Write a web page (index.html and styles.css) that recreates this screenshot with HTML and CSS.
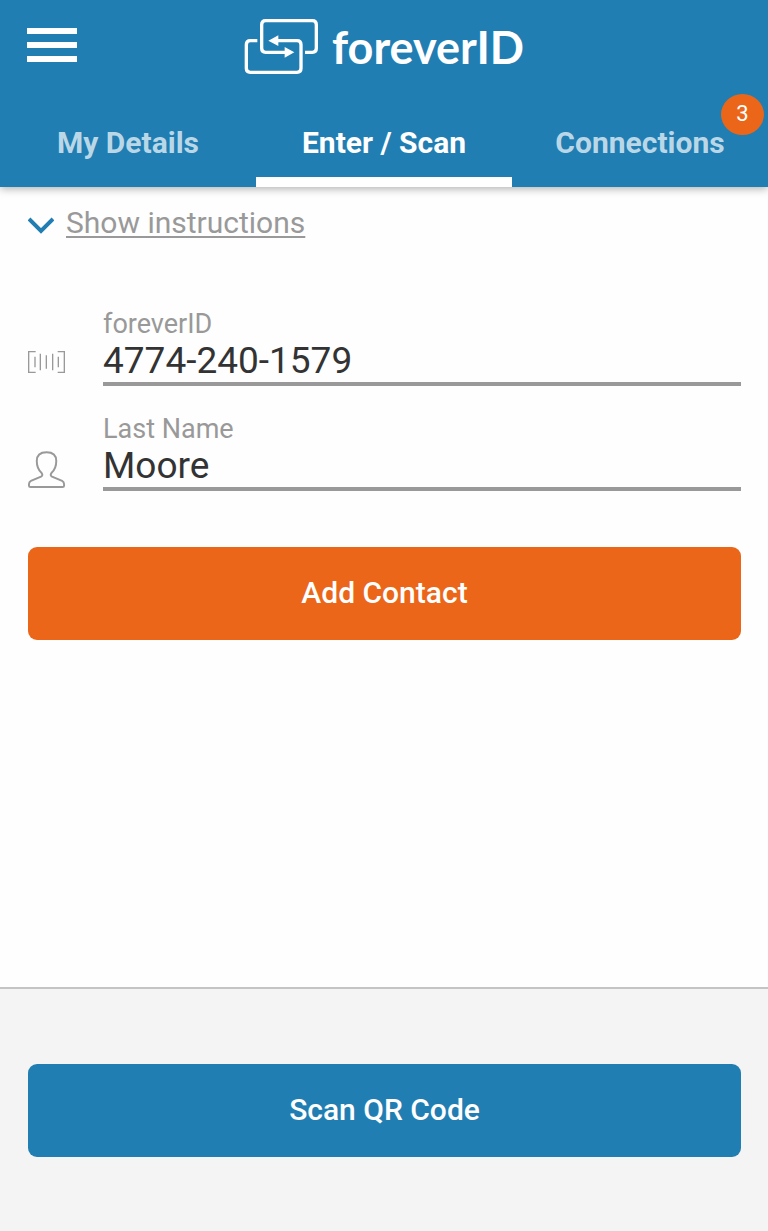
FILE: index.html
```html
<!DOCTYPE html>
<html lang="en">
<head>
<meta charset="utf-8">
<meta name="viewport" content="width=device-width, initial-scale=1">
<title>foreverID</title>
<link rel="stylesheet" href="styles.css">
</head>
<body>
<header class="header">
  <div class="topbar">
    <button class="menu" type="button" aria-label="Menu"><span></span><span></span><span></span></button>
    <div class="brand">
      <svg class="brand-icon" viewBox="30 39 222 171" aria-hidden="true">
        <path class="brand-line" d="M213 142H235Q247 142 247 130V59Q247 47 235 47H95Q83 47 83 59V130Q83 142 95 142H155M70 107H49Q37 107 37 119V190Q37 202 49 202H189Q201 202 201 190V119Q201 107 189 107H130"/>
        <path class="brand-head" d="M152 126L181 142L152 158ZM133 91L103 107L133 123Z"/>
      </svg>
      <span class="brand-name">foreverID</span>
    </div>
  </div>
  <nav class="tabs">
    <a class="tab" href="#details">My Details</a>
    <a class="tab tab-active" href="#scan" aria-current="page">Enter / Scan</a>
    <a class="tab" href="#connections">Connections<span class="badge">3</span></a>
  </nav>
</header>
<main class="main">
  <a class="instructions" href="#instructions">
    <svg class="chevron" viewBox="0 0 26 18" aria-hidden="true"><path d="M1 3L13 15L25 3"/></svg>
    <span class="instructions-text">Show instructions</span>
  </a>
  <form class="form">
    <div class="field">
      <svg class="icon-code" viewBox="53 150 117 72" aria-hidden="true">
        <path d="M76 155H55V217H76M142 155H162V217H142M74 170V202M90 161V211M108 166V206M127 161V211M144 170V202"/>
      </svg>
      <div class="field-body">
        <label class="label" for="fid">foreverID</label>
        <input class="input" id="fid" type="text" value="4774-240-1579">
      </div>
    </div>
    <div class="field">
      <svg class="icon-person" viewBox="53 132 120 120" aria-hidden="true">
        <path d="M110 139C90 139 80 150 80 166C80 187 87 196 95 203Q100 210 93 214L62 227Q56 230 56 237V242Q56 246 61 246H159Q164 246 164 242V237Q164 230 158 227L127 214Q120 210 125 203C133 196 140 187 140 166C140 150 130 139 110 139Z"/>
      </svg>
      <div class="field-body">
        <label class="label" for="lname">Last Name</label>
        <input class="input" id="lname" type="text" value="Moore">
      </div>
    </div>
    <button class="button button-add" type="button">Add Contact</button>
  </form>
</main>
<footer class="footer">
  <button class="button button-scan" type="button">Scan QR Code</button>
</footer>
</body>
</html>
```
FILE: styles.css
```css
* { box-sizing: border-box; }

body {
  margin: 0;
  min-height: 100vh;
  display: flex;
  flex-direction: column;
  background: #fefefe;
  font-family: Roboto, "Liberation Sans", sans-serif;
}

.header {
  background: #217eb2;
  box-shadow: 0 2px 8px rgba(0, 0, 0, 0.3);
}

.topbar {
  display: grid;
  grid-template-columns: 1fr auto 1fr;
  align-items: center;
  height: 94px;
  padding: 0 27px 2px;
}

.menu {
  display: flex;
  flex-direction: column;
  gap: 8px;
  width: 50px;
  padding: 0 0 2px;
  border: 0;
  background: none;
}

.menu span {
  height: 6px;
  width: 50px;
  background: #fff;
}

.brand {
  display: flex;
  align-items: center;
  gap: 14px;
  color: #fff;
}

.brand-icon { width: 74px; height: 57px; }
.brand-line { fill: none; stroke: #fff; stroke-width: 10; }
.brand-head { fill: #fff; }

.brand-name {
  padding-top: 2px;
  font: 700 45px/52px Lato, sans-serif;
}

.tabs {
  display: grid;
  grid-template-columns: repeat(3, 1fr);
}

.tab {
  position: relative;
  height: 93px;
  padding-top: 31px;
  border-bottom: 10px solid transparent;
  color: #bad7e7;
  font-size: 30px;
  font-weight: 700;
  line-height: 36px;
  text-align: center;
  text-decoration: none;
}

.tab-active {
  color: #fff;
  border-bottom-color: #fff;
}

.badge {
  position: absolute;
  top: 0;
  right: 4px;
  width: 43px;
  height: 41px;
  border-radius: 50%;
  background: #eb6618;
  color: #fff;
  font-size: 22px;
  font-weight: 400;
  line-height: 40px;
}

.main {
  flex: 1;
  padding: 18px 27px 0 28px;
}

.instructions {
  display: inline-flex;
  align-items: center;
  gap: 12px;
  color: #999;
  font-size: 30px;
  line-height: 36px;
  text-decoration: none;
}

.instructions-text {
  text-decoration: underline;
  text-decoration-thickness: 2px;
  text-underline-offset: 3px;
}

.chevron { width: 26px; height: 18px; margin-top: 4px; }
.chevron path { fill: none; stroke: #217eb2; stroke-width: 4; }

.form {
  display: flex;
  flex-direction: column;
  margin-top: 68px;
}

.field {
  display: grid;
  grid-template-columns: 75px 1fr;
  align-items: end;
  margin-bottom: 28px;
}

.field-body {
  display: flex;
  flex-direction: column;
}

.label {
  color: #999;
  font-size: 27px;
  line-height: 30px;
}

.input {
  width: 100%;
  height: 47px;
  padding: 0 0 1px;
  border: 0;
  border-bottom: 4px solid #999;
  border-radius: 0;
  outline: 0;
  background: none;
  color: #333;
  font: 400 37px/40px Roboto, "Liberation Sans", sans-serif;
}

.icon-code { width: 39px; height: 24px; margin-bottom: 12px; }
.icon-person { width: 39px; height: 39px; margin-bottom: 2px; }
.icon-code path { fill: none; stroke: #999; stroke-width: 4; }
.icon-person path { fill: none; stroke: #999; stroke-width: 6; }

.button {
  width: 100%;
  height: 93px;
  padding: 0 0 2px;
  border: 0;
  border-radius: 9px;
  color: #fff;
  font: 500 30px/36px Roboto, "Liberation Sans", sans-serif;
}

.button-add { margin-top: 28px; background: #eb6618; }
.button-scan { background: #217eb2; }

.footer {
  padding: 75px 27px 74px 28px;
  border-top: 2px solid #c4c4c4;
  background: #f4f4f4;
}
```
